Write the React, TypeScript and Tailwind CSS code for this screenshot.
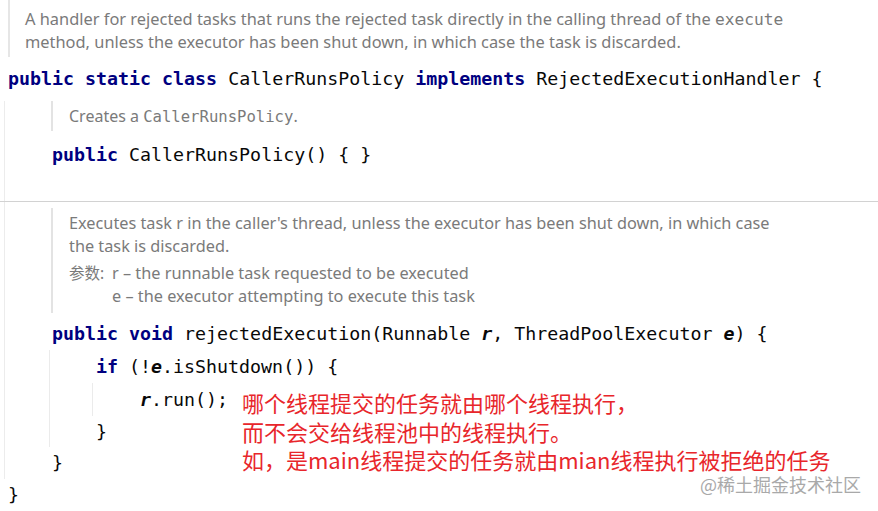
import React from "react";

const mono = "font-['DejaVu_Sans_Mono',monospace]";
const prose = "font-['Noto_Sans','Noto_Sans_CJK_SC',sans-serif]";

function K({ children }: { children: React.ReactNode }) {
  return <span className="font-bold text-[#000080]">{children}</span>;
}
function P({ children }: { children: React.ReactNode }) {
  return <span className="font-bold italic">{children}</span>;
}
function DocMono({ children, size = "text-[16.2px]" }: { children: React.ReactNode; size?: string }) {
  return <span className={`${mono} ${size}`}>{children}</span>;
}

function CodeLine({ children, h = "h-[32px] leading-[32px]", className = "" }: { children: React.ReactNode; h?: string; className?: string }) {
  return (
    <div className={`${mono} ${h} text-[18.3px] text-[#080808] whitespace-pre ${className}`}>{children}</div>
  );
}

export default function App() {
  return (
    <div className="relative w-[878px] h-[511px] overflow-hidden bg-white">
      {/* class doc */}
      <div className={`ml-[8px] border-l-2 border-[#e6e6e6] pl-[15px] pt-[7px] pb-[4px] ${prose} text-[16.4px] leading-[23px] text-[#7a7a7a]`}>
        <div className="whitespace-nowrap h-[23px]">
          A handler for rejected tasks that runs the rejected task directly in the calling thread of the <DocMono>execute</DocMono>
        </div>
        <div className="whitespace-nowrap h-[23px]">method, unless the executor has been shut down, in which case the task is discarded.</div>
      </div>

      <CodeLine className="mt-[6px] pl-[8px]">
        <K>public static class</K> CallerRunsPolicy <K>implements</K> RejectedExecutionHandler {"{"}
      </CodeLine>

      {/* class body */}
      <div className="ml-[4px] border-l border-[#ececec]">
        <div className={`mt-[6px] ml-[46px] border-l-2 border-[#e3e3e3] pl-[16px] pt-[4px] pb-[3px] ${prose} text-[16px] leading-[23px] text-[#7a7a7a] whitespace-nowrap`}>
          <div className="h-[23px]">
            Creates a <DocMono size="text-[15.6px]">CallerRunsPolicy</DocMono>.
          </div>
        </div>
        <CodeLine className="mt-[8px] ml-[47px]">
          <K>public</K> CallerRunsPolicy() {"{ }"}
        </CodeLine>

        <div className="mt-[30px] -ml-[5px] h-px bg-[#d2d2d2]" />

        <div className={`mt-[6px] ml-[46px] border-l-2 border-[#e3e3e3] pl-[16px] pt-[4px] pb-[5px] ${prose} text-[16.3px] leading-[23px] text-[#7a7a7a]`}>
          <div className="whitespace-nowrap h-[23px]">Executes task r in the caller's thread, unless the executor has been shut down, in which case</div>
          <div className="whitespace-nowrap h-[23px]">the task is discarded.</div>
          <div className="mt-[4px] flex whitespace-nowrap">
            <div className="w-[43px] text-[15.5px]">参数:</div>
            <div>
              <div className="h-[23px]">r – the runnable task requested to be executed</div>
              <div className="h-[23px]">e – the executor attempting to execute this task</div>
            </div>
          </div>
        </div>

        <CodeLine className="mt-[5px] ml-[47px]">
          <K>public void</K> rejectedExecution(Runnable <P>r</P>, ThreadPoolExecutor <P>e</P>) {"{"}
        </CodeLine>
        <div className="ml-[44px] border-l border-[#ebebeb] pl-[46px]">
          <CodeLine h="h-[33px] leading-[33px]">
            <K>if</K> (!<P>e</P>.isShutdown()) {"{"}
          </CodeLine>
          <div className="-ml-[4px] border-l border-[#ebebeb] pl-[47px]">
            <CodeLine h="h-[33px] leading-[33px]">
              <P>r</P>.run();
            </CodeLine>
          </div>
          <CodeLine h="h-[31px] leading-[31px]">{"}"}</CodeLine>
        </div>
        <CodeLine className="ml-[47px]">{"}"}</CodeLine>
      </div>
      <CodeLine className="pl-[8px]">{"}"}</CodeLine>

      {/* red annotation */}
      <div className="absolute left-[242px] top-[388px] font-['Noto_Sans_CJK_SC',sans-serif] text-[22px] leading-[28.5px] text-[#e8262b] whitespace-nowrap">
        <div>哪个线程提交的任务就由哪个线程执行，</div>
        <div>而不会交给线程池中的线程执行。</div>
        <div>如，是main线程提交的任务就由mian线程执行被拒绝的任务</div>
      </div>

      {/* watermark */}
      <div className="absolute left-[700px] top-[472px] font-['Noto_Sans_CJK_SC',sans-serif] text-[18px] leading-[24px] text-[#a9a9a9] whitespace-nowrap">
        @稀土掘金技术社区
      </div>
    </div>
  );
}
